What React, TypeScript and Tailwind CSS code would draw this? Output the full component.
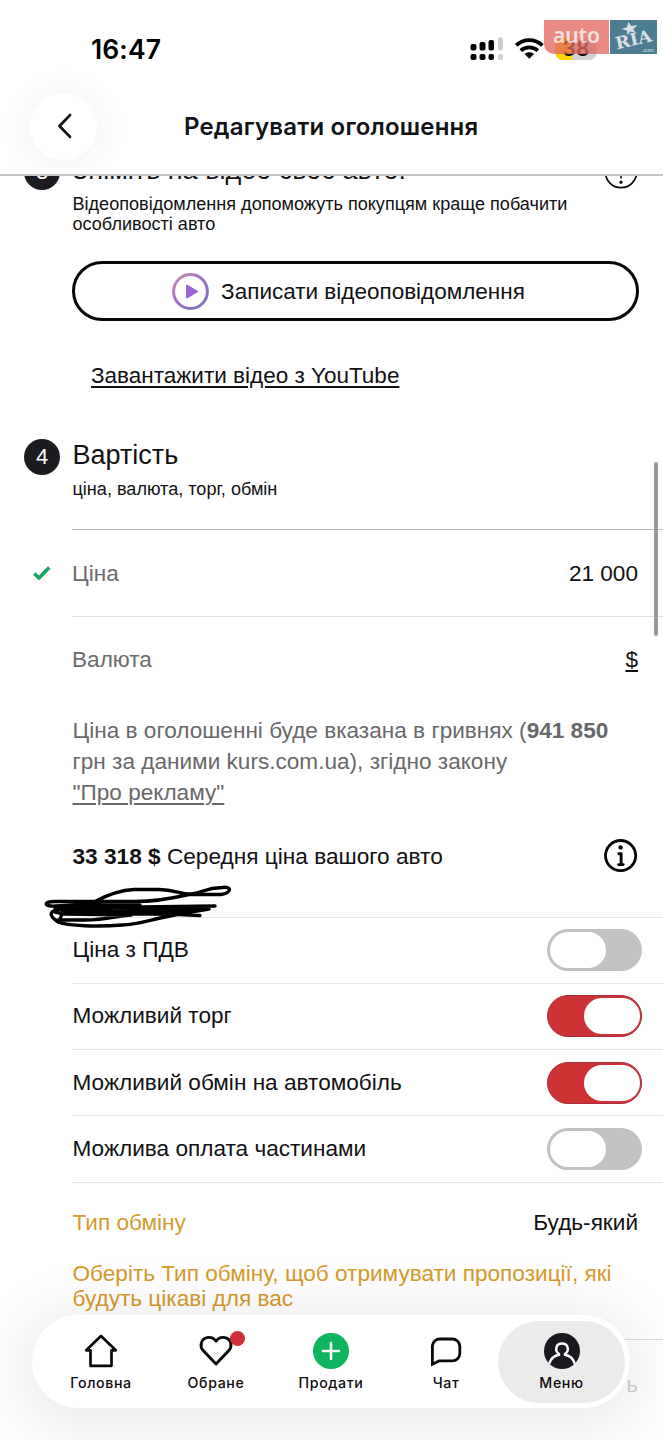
import React from "react";

function StepBadge({ n }: { n: string }) {
  return (
    <span className="flex size-9 shrink-0 items-center justify-center rounded-full bg-[#1b1b20] text-[22px] leading-none text-white">
      {n}
    </span>
  );
}

function InfoIcon() {
  return (
    <svg className="size-[34px]" viewBox="0 0 34 34" fill="none" stroke="#050505">
      <circle cx="16.6" cy="16.6" r="15.1" strokeWidth="2.8" />
      <circle cx="16.6" cy="8.4" r="2.2" fill="#050505" stroke="none" />
      <path d="M14.9 14.8h2.2V25.4M14.6 25.6h4.6" strokeWidth="2.9" strokeLinecap="round" strokeLinejoin="round" />
    </svg>
  );
}

function Toggle({ on }: { on: boolean }) {
  return (
    <span
      className={
        on
          ? "flex h-[42px] w-[95px] items-center justify-end rounded-full border-[1.5px] border-[#a82f3c] bg-[#cd3335] pr-[1.5px]"
          : "flex h-[42px] w-[95px] items-center justify-start rounded-full bg-[#c2c2c5] pl-[3px]"
      }
    >
      <span className="h-[36px] w-[56px] rounded-full bg-white" />
    </span>
  );
}

const options = [
  { label: "Ціна з ПДВ", on: false },
  { label: "Можливий торг", on: true },
  { label: "Можливий обмін на автомобіль", on: true },
  { label: "Можлива оплата частинами", on: false },
];

function Header() {
  return (
    <header className="relative z-10 h-[176px] shrink-0 overflow-hidden border-b-2 border-[#c6c6c6] bg-white">
      <div className="flex h-[92px] items-start pt-[32px] pl-[91px] font-[Inter] text-[26.5px] leading-[34px] font-semibold text-black">
        <span className="w-[379px] tracking-[0.1px]">16:47</span>
        <svg className="mt-[4px] h-[26px] w-[128px]" viewBox="0 0 128 26">
          <g fill="#050505">
            <rect x="0.5" y="8" width="6" height="6.5" rx="2" />
            <rect x="9.5" y="6" width="6" height="8.5" rx="2" />
            <rect x="18.5" y="4" width="5.500" height="10.500" rx="2" />
            <rect x="0.5" y="18" width="6" height="6" rx="2" />
            <rect x="9.5" y="18" width="6" height="6" rx="2" />
            <rect x="18.5" y="18" width="5.500" height="6" rx="2" />
          </g>
          <rect x="28" y="1.200" width="5" height="13.300" rx="2" fill="#cfcfcf" />
          <rect x="28" y="18" width="5" height="6" rx="2" fill="#cfcfcf" />
          <g fill="none" stroke="#050505" strokeWidth="3.9">
            <path d="M46.2 9.4C53.500 2.400 65 2.400 72.400 9.400" />
            <path d="M50.800 14.600C55.600 10.300 63 10.300 67.800 14.600" />
          </g>
          <path d="M54.600 18C57.200 15.600 61.400 15.600 64 18L59.300 22.700Z" fill="#050505" />
          <rect x="85.500" y="1.500" width="41" height="22.500" rx="7" fill="#d2d2d4" />
          <path d="M102 1.500V24H92.500A7 7 0 0 1 85.500 17V8.500A7 7 0 0 1 92.500 1.500Z" fill="#fdd500" />
          <text x="106" y="19.700" textAnchor="middle" fontFamily="Inter" fontSize="21" fontWeight="600" fill="#111">38</text>
        </svg>
      </div>
      <div className="flex h-[68px] items-center pl-[30px]">
        <button className="flex size-[67px] items-center justify-center rounded-full bg-white shadow-[0_3px_30px_10px_rgba(0,0,0,0.035)]">
          <svg className="size-[30px]" viewBox="0 0 30 30" fill="none" stroke="#111" strokeWidth="2.800" strokeLinecap="round" strokeLinejoin="round">
            <path d="M21 4.100L10.500 15L21 25.900" />
          </svg>
        </button>
        <h1 className="mt-[2px] ml-[87px] font-[Inter] text-[24px] font-semibold tracking-[0.18px] whitespace-nowrap text-[#101216]">Редагувати оголошення</h1>
      </div>
      <div className="absolute top-[20px] left-[544px] flex h-[34px] w-[113px] gap-px opacity-95">
        <span className="flex w-[65px] items-center justify-center rounded-bl-[10px] bg-[#e2655c]/80 pb-[3px] font-['Noto_Sans'] text-[21px] leading-none font-semibold tracking-[0px] text-white/75">auto</span>
        <svg className="h-[34px] w-[47px]" viewBox="0 0 47 34">
          <rect width="47" height="34" fill="#43758d" />
          <g transform="rotate(-13 23 20)" fill="#d3dee3">
            <text x="23.500" y="25.500" textAnchor="middle" fontFamily="DejaVu Serif" fontSize="17" fontWeight="700" textLength="37" lengthAdjust="spacingAndGlyphs">RIA</text>
            <path d="M22.500 1.500l2 4.600 6.400.4-5.200 3 1.500 4.100-4.700-2.500-4.200 2.500 1.100-4.200-5.400-2.800 6-.4z" />
          </g>
          <text x="32" y="31.500" fontFamily="Liberation Sans" fontSize="5.500" fontStyle="italic" fill="#dce4e8">.com</text>
        </svg>
      </div>
    </header>
  );
}

function Main() {
  return (
    <main className="h-[1264px] overflow-hidden">
      <div className="-mt-[22px] flex h-[40px] items-start pl-6">
        <StepBadge n="3" />
        <h2 className="ml-3 w-[532px] text-[27px] leading-[32px]">Зніміть на відео своє авто!</h2>
        <svg className="mt-px size-[34px]" viewBox="0 0 34 34" fill="none" stroke="#050505">
          <circle cx="17" cy="17" r="15.700" strokeWidth="1.700" />
          <path d="M17 18V23.500" strokeWidth="1.500" />
          <circle cx="17" cy="27.200" r="1.600" fill="#050505" stroke="none" />
        </svg>
      </div>
      <p className="h-[67px] pl-[72.500px] text-[18.080px] leading-[20px] whitespace-nowrap">
        Відеоповідомлення допоможуть покупцям краще побачити<br />особливості авто
      </p>
      <button className="ml-[72px] flex h-[60px] w-[567px] items-center justify-center gap-3 rounded-full border-[3px] border-[#08080a] pr-[14px] text-[22.500px]">
        <svg className="size-[37px] shrink-0" viewBox="0 0 37 37">
          <defs>
            <linearGradient id="play" x1="0" y1="0" x2="1" y2="1">
              <stop offset="0" stopColor="#c98fa8" />
              <stop offset=".5" stopColor="#9a70cc" />
              <stop offset="1" stopColor="#727bb0" />
            </linearGradient>
          </defs>
          <circle cx="18.500" cy="18.500" r="16.900" fill="none" stroke="url(#play)" strokeWidth="3" />
          <path d="M15 12.700L25 18.500L15 24.300Z" fill="#9865d8" stroke="#9865d8" strokeWidth="2" strokeLinejoin="round" />
        </svg>
        <span className="pt-[2px] whitespace-nowrap">Записати відеоповідомлення</span>
      </button>
      <div className="flex h-[118px] items-start pt-[42px] pl-[91px]">
        <a className="text-[22.500px] leading-[26px] underline decoration-2 underline-offset-[3px]">Завантажити відео з YouTube</a>
      </div>

      <section>
        <div className="flex h-[90px] items-start pl-6">
          <StepBadge n="4" />
          <div className="ml-[12.500px]">
            <h2 className="text-[27px] leading-[32px]">Вартість</h2>
            <p className="mt-[8px] text-[18.080px] leading-[20px]">ціна, валюта, торг, обмін</p>
          </div>
        </div>
        <div className="ml-[72px] flex h-[88px] items-center justify-between border-y border-t-[#b9b9b9] border-b-[#dedede] pr-[25px] text-[22.600px]">
          <span className="flex items-center pt-[2px] text-[#6b6b6d]">
            <svg className="-mt-[2px] -ml-[40px] mr-[20px] size-5" viewBox="0 0 20 20" fill="none" stroke="#15a663" strokeWidth="3.600" strokeLinejoin="round">
              <path d="M2.300 10.500L7 15L17.300 4.500" />
            </svg>
            Ціна
          </span>
          <span className="pt-[2px]">21 000</span>
        </div>
        <div className="ml-[72px] flex h-[86px] items-center justify-between pr-[25px] text-[22.600px]">
          <span className="text-[#6b6b6d]">Валюта</span>
          <span className="underline decoration-2 underline-offset-[3px]">$</span>
        </div>
        <p className="ml-[72.500px] h-[105px] pt-[12px] text-[22.600px] leading-[31px] whitespace-nowrap text-[#68686b]">
          Ціна в оголошенні буде вказана в гривнях (<b>941 850</b><br />
          грн за даними kurs.com.ua), згідно закону<br />
          <a className="underline decoration-2 underline-offset-[3px]">"Про рекламу"</a>
        </p>
        <div className="ml-[72.500px] flex h-[109.500px] items-start justify-between border-b border-[#e6e6e6] pt-[31px] pr-[25px] text-[22.650px] leading-[34px]">
          <span><b>33 318 $</b> Середня ціна вашого авто</span>
          <InfoIcon />
        </div>
        {options.map((o) => (
          <div key={o.label} className="ml-[72.500px] flex h-[66.250px] items-center justify-between border-b border-[#e6e6e6] pr-[21px] text-[22.600px]">
            <span>{o.label}</span>
            <Toggle on={o.on} />
          </div>
        ))}
        <div className="ml-[72.500px] flex h-[78px] items-center justify-between pt-[3px] pr-[25px] text-[22.600px]">
          <span className="text-[#d59a2c]">Тип обміну</span>
          <span>Будь-який</span>
        </div>
        <p className="ml-[72.500px] h-[78px] text-[22.600px] leading-[25px] whitespace-nowrap text-[#d59a2c]">
          Оберіть Тип обміну, щоб отримувати пропозиції, які<br />будуть цікаві для вас
        </p>
        <div className="ml-[72px] flex h-[101px] justify-end border-t border-[#dedede] pt-[28px] pr-[25px] text-[22px] text-[#d0d0d0]">
          ь
        </div>
      </section>
    </main>
  );
}

function NavItem({ label, active, children }: { label: string; active?: boolean; children: React.ReactNode }) {
  return (
    <div
      className={
        active
          ? "flex h-[82px] w-[127px] flex-col items-center rounded-full bg-[#ebebec] pt-[11px]"
          : "flex h-[82px] w-[115px] flex-col items-center pt-[11px]"
      }
    >
      <div className="relative flex h-[38px] items-center justify-center">{children}</div>
      <span className="mt-[4px] font-[Inter] text-[14.200px] leading-[18px] font-medium tracking-[0.600px] text-[#0b0b0c]">{label}</span>
    </div>
  );
}

function BottomNav() {
  return (
    <nav className="absolute top-[1315px] left-[32px] z-20 flex h-[93px] w-[598px] items-center rounded-full bg-white pl-[11.500px] shadow-[0_8px_60px_12px_rgba(0,0,0,0.085)]">
      <NavItem label="Головна">
        <svg className="size-9" viewBox="0 0 36 36" fill="none" stroke="#09090a" strokeWidth="2.700" strokeLinejoin="round" strokeLinecap="round">
          <path d="M18 3L3.200 17.300H7.500V32.800H28.500V17.300H32.800Z" />
        </svg>
      </NavItem>
      <NavItem label="Обране">
        <svg className="size-9" viewBox="0 0 36 36" fill="none" stroke="#09090a" strokeWidth="2.900" strokeLinejoin="round">
          <path d="M18 31L4.900 17.300C1.400 13 3 5.800 9 4.600C12.700 3.900 16 5.400 18 8.200C20 5.400 23.300 3.900 27 4.600C33 5.800 34.600 13 31.100 17.300Z" />
        </svg>
        <span className="absolute -top-[1px] left-[32px] size-[15px] rounded-full bg-[#cf3039]" />
      </NavItem>
      <NavItem label="Продати">
        <svg className="size-9" viewBox="0 0 36 36">
          <circle cx="18" cy="18" r="18" fill="#0eb45e" />
          <path d="M18 10V26M10 18H26" stroke="#fff" strokeWidth="2.600" strokeLinecap="round" />
        </svg>
      </NavItem>
      <NavItem label="Чат">
        <svg className="size-9" viewBox="0 0 36 36" fill="none" stroke="#09090a" strokeWidth="2.800" strokeLinejoin="miter">
          <path d="M4.400 31.300V12.500A7.500 7.500 0 0 1 11.900 6H23.800A7.500 7.500 0 0 1 31.800 13.500V20.400A7.500 7.500 0 0 1 23.800 27.900H11Z" />
        </svg>
      </NavItem>
      <div className="-ml-[5.500px]">
        <NavItem label="Меню" active>
          <svg className="size-9" viewBox="0 0 36 36">
            <defs>
              <clipPath id="avatar"><circle cx="18" cy="18" r="18" /></clipPath>
            </defs>
            <g clipPath="url(#avatar)">
              <rect width="36" height="36" fill="#19191f" />
              <path d="M5 31C7 25.500 10.500 22.500 15 21.800V21C10.500 18 11.500 10.500 18 10.500C24.500 10.500 25.500 18 21 21V21.800C25.500 22.500 29 25.500 31 31" fill="none" stroke="#fff" strokeWidth="2.400" />
            </g>
          </svg>
        </NavItem>
      </div>
    </nav>
  );
}

export default function App() {
  return (
    <div className="relative flex h-[1440px] w-[663px] flex-col overflow-hidden bg-white font-['Liberation_Sans',sans-serif] text-[#111113]">
      <Header />
      <Main />
      <svg className="pointer-events-none absolute top-[880px] left-[40px] h-[52px] w-[200px]" viewBox="0 0 200 52" fill="none" stroke="#000" strokeWidth="3.400" strokeLinecap="round" strokeLinejoin="round">
        <path d="M56 21C73 12 85 10 94 9.500H119C135 10 140 14 151 14C162 13 165 8 182 7.500C193 6 191 13 181 14.500H149C125 20 108 22 91 21.500H16C3 21 3 27 16 26L54 24" />
        <path d="M15 28H28L175 26M25 27C27 33 30 32 169 29C150 32 139 34 125 37C111 40 96 45 82 45C58 47 28 46 18 42C8 35 8 30 24 29L160 35.500" />
        <path d="M18 40H45C67 40 76 36 91 35L24 34L15 32M25 26L20 39M25 31H145M45 34H140M51 24L100 28H160M60 25H100" />
      </svg>
      <span className="absolute top-[462px] left-[654px] h-[174px] w-[4px] rounded-full bg-[#9a9a9b]" />
      <BottomNav />
    </div>
  );
}
